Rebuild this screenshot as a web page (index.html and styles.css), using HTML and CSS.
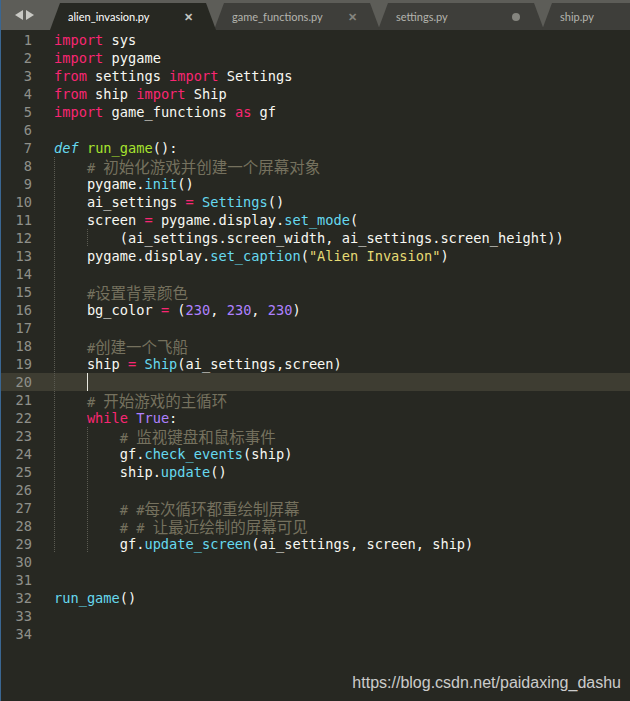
FILE: index.html
```html
<!DOCTYPE html>
<html lang="en">
<head>
    <meta charset="UTF-8">
    <title>alien_invasion.py</title>
    <link rel="stylesheet" href="styles.css">
</head>
<body>
    <div class="window">
        <div class="tabbar">
            <div class="nav">
                <svg width="20" height="10" viewBox="0 0 20 10">
                    <polygon points="0,5 8,0 8,10" fill="#c9c9c4"/>
                    <polygon points="19,5 11,0 11,10" fill="#c9c9c4"/>
                </svg>
            </div>
            <div class="tab active">
                <span class="tab-name">alien_invasion.py</span>
                <span class="tab-close">&#x2715;</span>
            </div>
            <div class="tab">
                <span class="tab-name">game_functions.py</span>
                <span class="tab-close">&#x2715;</span>
            </div>
            <div class="tab">
                <span class="tab-name">settings.py</span>
                <span class="tab-dot"></span>
            </div>
            <div class="tab">
                <span class="tab-name">ship.py</span>
            </div>
        </div>

        <div class="editor">
            <div class="line"><span class="ln">1</span><span class="code"><span class="k">import</span> sys</span></div>
            <div class="line"><span class="ln">2</span><span class="code"><span class="k">import</span> pygame</span></div>
            <div class="line"><span class="ln">3</span><span class="code"><span class="k">from</span> settings <span class="k">import</span> Settings</span></div>
            <div class="line"><span class="ln">4</span><span class="code"><span class="k">from</span> ship <span class="k">import</span> Ship</span></div>
            <div class="line"><span class="ln">5</span><span class="code"><span class="k">import</span> game_functions <span class="k">as</span> gf</span></div>
            <div class="line"><span class="ln">6</span><span class="code"></span></div>
            <div class="line"><span class="ln">7</span><span class="code"><span class="d">def</span> <span class="f">run_game</span>():</span></div>
            <div class="line"><span class="ln">8</span><span class="code"><span class="ind"></span><span class="cm"># <span class="zh">初始化游戏并创建一个屏幕对象</span></span></span></div>
            <div class="line"><span class="ln">9</span><span class="code"><span class="ind"></span>pygame.<span class="c">init</span>()</span></div>
            <div class="line"><span class="ln">10</span><span class="code"><span class="ind"></span>ai_settings <span class="k">=</span> <span class="c">Settings</span>()</span></div>
            <div class="line"><span class="ln">11</span><span class="code"><span class="ind"></span>screen <span class="k">=</span> pygame.display.<span class="c">set_mode</span>(</span></div>
            <div class="line"><span class="ln">12</span><span class="code"><span class="ind"></span><span class="ind"></span>(ai_settings.screen_width, ai_settings.screen_height))</span></div>
            <div class="line"><span class="ln">13</span><span class="code"><span class="ind"></span>pygame.display.<span class="c">set_caption</span>(<span class="s">"Alien Invasion"</span>)</span></div>
            <div class="line"><span class="ln">14</span><span class="code"><span class="ind"></span></span></div>
            <div class="line"><span class="ln">15</span><span class="code"><span class="ind"></span><span class="cm">#<span class="zh">设置背景颜色</span></span></span></div>
            <div class="line"><span class="ln">16</span><span class="code"><span class="ind"></span>bg_color <span class="k">=</span> (<span class="n">230</span>, <span class="n">230</span>, <span class="n">230</span>)</span></div>
            <div class="line"><span class="ln">17</span><span class="code"><span class="ind"></span></span></div>
            <div class="line"><span class="ln">18</span><span class="code"><span class="ind"></span><span class="cm">#<span class="zh">创建一个飞船</span></span></span></div>
            <div class="line"><span class="ln">19</span><span class="code"><span class="ind"></span>ship <span class="k">=</span> <span class="c">Ship</span>(ai_settings,screen)</span></div>
            <div class="line current"><span class="ln">20</span><span class="code"><span class="ind"></span><span class="caret"></span></span></div>
            <div class="line"><span class="ln">21</span><span class="code"><span class="ind"></span><span class="cm"># <span class="zh">开始游戏的主循环</span></span></span></div>
            <div class="line"><span class="ln">22</span><span class="code"><span class="ind"></span><span class="k">while</span> <span class="n">True</span>:</span></div>
            <div class="line"><span class="ln">23</span><span class="code"><span class="ind"></span><span class="ind"></span><span class="cm"># <span class="zh">监视键盘和鼠标事件</span></span></span></div>
            <div class="line"><span class="ln">24</span><span class="code"><span class="ind"></span><span class="ind"></span>gf.<span class="c">check_events</span>(ship)</span></div>
            <div class="line"><span class="ln">25</span><span class="code"><span class="ind"></span><span class="ind"></span>ship.<span class="c">update</span>()</span></div>
            <div class="line"><span class="ln">26</span><span class="code"><span class="ind"></span><span class="ind"></span></span></div>
            <div class="line"><span class="ln">27</span><span class="code"><span class="ind"></span><span class="ind"></span><span class="cm"># #<span class="zh">每次循环都重绘制屏幕</span></span></span></div>
            <div class="line"><span class="ln">28</span><span class="code"><span class="ind"></span><span class="ind"></span><span class="cm"># # <span class="zh">让最近绘制的屏幕可见</span></span></span></div>
            <div class="line"><span class="ln">29</span><span class="code"><span class="ind"></span><span class="ind"></span>gf.<span class="c">update_screen</span>(ai_settings, screen, ship)</span></div>
            <div class="line"><span class="ln">30</span><span class="code"></span></div>
            <div class="line"><span class="ln">31</span><span class="code"></span></div>
            <div class="line"><span class="ln">32</span><span class="code"><span class="c">run_game</span>()</span></div>
            <div class="line"><span class="ln">33</span><span class="code"></span></div>
            <div class="line"><span class="ln">34</span><span class="code"></span></div>
        </div>

        <div class="watermark">https://blog.csdn.net/paidaxing_dashu</div>
    </div>
</body>
</html>
```

FILE: styles.css
```css
* {
    margin: 0;
    padding: 0;
    box-sizing: border-box;
}

html, body {
    height: 100%;
}

body {
    background: #272822;
    overflow: hidden;
}

.window {
    position: relative;
    height: 100%;
    border-left: 1px solid #3a6691;
    background: #272822;
}

/* tab strip */
.tabbar {
    display: flex;
    align-items: flex-end;
    height: 30px;
    background: #5d5d58;
    overflow: hidden;
}

.nav {
    flex: none;
    width: 49px;
    height: 30px;
    display: flex;
    align-items: center;
    padding-left: 14px;
}

.tab {
    flex: none;
    position: relative;
    width: 166px;
    height: 27px;
    margin-right: -2px;
    display: flex;
    align-items: center;
    padding-left: 18px;
    background: #3e3e3a;
    clip-path: polygon(10px 0, 156px 0, 100% 100%, 0 100%);
    font-family: Lato, "Liberation Sans", sans-serif;
    font-size: 11px;
    color: #b4b4ae;
}

.tab.active {
    z-index: 2;
    background: #272822;
    color: #fff;
}

.tab-name {
    flex: 1;
}

.tab-close {
    width: 32px;
    font-size: 11px;
    font-weight: bold;
    color: #85857f;
}

.tab.active .tab-close {
    color: #c4c4c0;
}

.tab-dot {
    width: 8px;
    height: 8px;
    margin-right: 24px;
    border-radius: 50%;
    background: #85857f;
}

/* code */
.editor {
    padding-top: 1px;
    font-family: "DejaVu Sans Mono", "Liberation Mono", monospace;
    font-size: 13.66px;
    color: #f8f8f2;
}

.line {
    display: flex;
    height: 18px;
    line-height: 18px;
}

.line.current {
    background: #3e3d32;
}

.ln {
    flex: none;
    width: 31px;
    text-align: right;
    color: #8f908a;
}

.code {
    padding-left: 22px;
    white-space: pre;
}

.ind {
    display: inline-block;
    width: 4ch;
    height: 18px;
    vertical-align: top;
    background-image: linear-gradient(#5b5b52 50%, transparent 50%);
    background-size: 1px 2px;
    background-repeat: repeat-y;
}

.caret {
    display: inline-block;
    width: 1px;
    height: 18px;
    vertical-align: top;
    background: #e8e8e0;
}

.k { color: #f92672; }
.f { color: #a6e22e; }
.c { color: #66d9ef; }
.d { color: #66d9ef; font-style: italic; }
.s { color: #e6db74; }
.n { color: #ae81ff; }
.cm { color: #75715e; }

.zh {
    display: inline-block;
    height: 18px;
    font-family: "Noto Sans CJK SC", sans-serif;
    font-size: 15.5px;
    line-height: 18px;
}

.watermark {
    position: absolute;
    right: 9px;
    bottom: 9px;
    font-family: "Liberation Sans", Arial, sans-serif;
    font-size: 16px;
    color: rgba(235, 235, 235, 0.85);
}
```
